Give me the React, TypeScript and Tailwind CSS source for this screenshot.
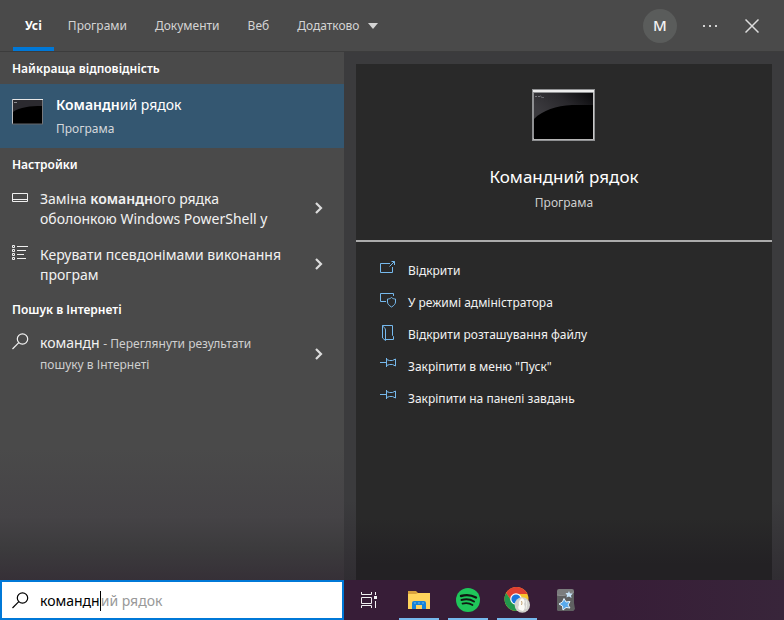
import { useState } from "react";
import type { ReactNode } from "react";

function Chevron() {
  return (
    <svg width="10" height="14" viewBox="0 0 10 14" fill="none" stroke="#dcdcdc" strokeWidth="2.2" className="mb-0.5" aria-hidden="true">
      <path d="M2 2 7 7 2 12" />
    </svg>
  );
}

function SearchIcon() {
  return (
    <svg width="17" height="17" viewBox="0 0 17 17" fill="none" stroke="currentColor" strokeWidth="1.2" aria-hidden="true">
      <circle cx="10.5" cy="6" r="5.2" />
      <path d="M6.8 9.7.5 16" />
    </svg>
  );
}

function SmallConsole() {
  return (
    <svg width="32" height="27" viewBox="0 0 32 27" aria-hidden="true">
      <rect x="0" y="0" width="31" height="25" fill="#000" />
      <path d="M1 1H30V7C18 7 8 8 1 13Z" fill="#2b2a2f" />
      <path d="M0 .5H31" stroke="#e6e6e6" />
      <path d="M.5 0V25" stroke="#b9bcc0" />
      <path d="M30.5 1V25" stroke="#77797d" />
      <path d="M0 25H31" stroke="#66686c" />
      <path d="M2 3.5H5" stroke="#8c8c90" />
    </svg>
  );
}

function LargeConsole() {
  return (
    <svg width="64" height="52" viewBox="0 0 64 52" aria-hidden="true">
      <defs>
        <linearGradient id="glare" x1="0" y1="0.5" x2="1" y2="0">
          <stop offset="0" stopColor="#3b3a3e" />
          <stop offset="0.5" stopColor="#29282c" />
          <stop offset="1" stopColor="#08080a" />
        </linearGradient>
      </defs>
      <rect width="63" height="52" fill="#8f9092" />
      <rect x="1" y="1" width="61" height="2" fill="#ededed" />
      <rect x="1" y="49" width="61" height="2" fill="#b5b5b5" />
      <rect x="61" y="3" width="1" height="47" fill="#c9c9c9" />
      <rect x="2" y="4" width="59" height="46" fill="#000" />
      <path d="M2 4H61V16H40C24 17 11 21 2 30Z" fill="url(#glare)" />
      <path d="M3 7.5H5M6 7.5H8" stroke="#77777c" />
      <path d="M8.500 6.500 9.500 8.500H12" stroke="#66666b" fill="none" />
    </svg>
  );
}

function DesktopIcon() {
  return (
    <svg width="16" height="16" viewBox="0 0 16 16" fill="none" stroke="#f0f0f0" aria-hidden="true">
      <path d="M.5.5H15.500V8.500H.5ZM.5 6.500H15.500" />
    </svg>
  );
}

function AliasListIcon() {
  return (
    <svg width="16" height="16" viewBox="0 0 16 16" fill="none" stroke="#f0f0f0" aria-hidden="true">
      <path d="M.5.5H2.500V2.500H.5ZM.5 4.500H2.500V6.500H.5ZM.5 8.500H2.500V10.500H.5ZM.5 12.500H2.500V14.500H.5Z" />
      <path d="M5 1.500H16M5 5.500H14M5 9.500H12M5 13.500H14" />
    </svg>
  );
}

function OpenIcon() {
  return (
    <svg width="16" height="16" viewBox="0 0 16 16" fill="none" stroke="#76b9ed" aria-hidden="true">
      <path d="M10 2.500H.5V11.500H12.500V6M9.500 5.500 14.500.5M11.500.5H14.500V4" />
    </svg>
  );
}

function AdminIcon() {
  return (
    <svg width="16" height="16" viewBox="0 0 16 16" fill="none" stroke="#76b9ed" aria-hidden="true">
      <path d="M6 8.500H.5V.5H13.500V3" />
      <path d="M11.500 4.500C10.500 5.500 9 6 7.500 6V9C7.500 11 9 12.500 11.500 14C14 12.500 15.500 11 15.500 9V6C14 6 12.500 5.500 11.500 4.500Z" />
    </svg>
  );
}

function FolderOutlineIcon() {
  return (
    <svg width="16" height="16" viewBox="0 0 16 16" fill="none" stroke="#76b9ed" aria-hidden="true">
      <path d="M6 14.500H13.500V11.500L12.500 10.500V.5H2.500V13L5.500 15.500V5C5.500 3 3.500 2.500 2.500.5" />
    </svg>
  );
}

function PinIcon() {
  return (
    <svg width="16" height="16" viewBox="0 0 16 16" fill="none" stroke="#76b9ed" aria-hidden="true">
      <path d="M0 5.500H6.500M6.500 1V10M6.500 2.500 9.500 3.500H12.500L15.500 2V9L12.500 7.500H9.500L6.500 8.500" />
    </svg>
  );
}

function TaskViewIcon() {
  return (
    <svg width="18" height="16" viewBox="0 0 18 16" fill="none" stroke="#f2f2f2" aria-hidden="true">
      <path d="M.5 0V2.500H10.500V0M.5 5.500H10.500V11.500H.5ZM.5 16V13.500H10.500V16M14.500 0V3M14.500 9V16" />
      <rect x="13" y="4" width="3" height="3" fill="#f2f2f2" stroke="none" />
    </svg>
  );
}

function ExplorerIcon() {
  return (
    <svg width="22" height="19" viewBox="0 0 22 19" aria-hidden="true">
      <path d="M0 0H8L10 2H21V18H0Z" fill="#d9a23e" />
      <path d="M0 3H8L10 2H22V18H0Z" fill="#ffd35c" />
      <path d="M4 18V12Q4 10 6 10H16Q18 10 18 12V18H14V14H8V18Z" fill="#1683d8" />
      <path d="M6 12H16" stroke="#6ab7ee" strokeDasharray="2 2" />
    </svg>
  );
}

function SpotifyIcon() {
  return (
    <svg width="24" height="24" viewBox="0 0 24 24" aria-hidden="true">
      <circle cx="12" cy="12" r="12" fill="#1fc65a" />
      <g fill="none" stroke="#101812" strokeLinecap="round">
        <path d="M5 8C10 6.500 15.500 7 20 9.500" strokeWidth="2.400" />
        <path d="M5.500 12C10 10.800 14.500 11.300 18 13.500" strokeWidth="2" />
        <path d="M6.500 15.600C10 14.700 13.500 15 16.500 17" strokeWidth="1.700" />
      </g>
    </svg>
  );
}

function ChromeIcon() {
  return (
    <svg width="26" height="26" viewBox="0 0 26 26" aria-hidden="true">
      <circle cx="12.500" cy="12" r="12" fill="#f7c52d" />
      <path d="M2.100 6A12 12 0 0 1 22.900 6L23.400 7H12.500L7.500 14Z" fill="#df4032" />
      <path d="M2.100 6A12 12 0 0 0 12.500 24L16 17L7.500 14Z" fill="#22974d" />
      <circle cx="12" cy="12" r="5.800" fill="#fff" />
      <circle cx="12" cy="12" r="4.600" fill="#1b76dc" />
      <circle cx="18.300" cy="18" r="7.700" fill="#d2d1cd" />
      <path d="M18 11Q22 13 20 17Q22 21 19 24Q12 23 15 18Q14 14 18 11Z" fill="#fbfaf6" />
      <path d="M22 13Q23.500 17 22 22" stroke="#f0efeb" fill="none" />
      <path d="M17.500 14Q18.500 16 17.500 18" stroke="#c3a678" fill="none" />
    </svg>
  );
}

function AnkiIcon() {
  return (
    <svg width="18" height="22" viewBox="0 0 18 22" aria-hidden="true">
      <rect width="17" height="22" rx="2" fill="#7b7c7d" />
      <path d="M0 6Q9 8 17 3V14L18 20Q17 22 15 22H2Q0 22 0 20Z" fill="#5f6061" />
      <path d="M0 6Q8 8 17 3" stroke="#909192" fill="none" />
      <path d="M7 9.500 9 13 13 12.500 11 16 13 19 9 18.500 6 21 5.500 17 2 15 5.500 13Z" fill="#58a9ec" stroke="#e7f4ff" />
      <path d="M12 2 13 4.500 16 4.500 14 6.500 14.500 9 12 7.500 9.500 8.500 10 6 8.500 4 11 4Z" fill="#c6e2f7" />
    </svg>
  );
}

const tabs = ["Усі", "Програми", "Документи", "Веб"];

const actions: { label: string; icon: ReactNode }[] = [
  { label: "Відкрити", icon: <OpenIcon /> },
  { label: "У режимі адміністратора", icon: <AdminIcon /> },
  { label: "Відкрити розташування файлу", icon: <FolderOutlineIcon /> },
  { label: 'Закріпити в меню "Пуск"', icon: <PinIcon /> },
  { label: "Закріпити на панелі завдань", icon: <PinIcon /> },
];

function SectionTitle({ children }: { children: ReactNode }) {
  return <h2 className="flex h-8 items-center px-3 pt-0.5 text-[12px] font-semibold text-white">{children}</h2>;
}

function ResultRow({ icon, children }: { icon: ReactNode; children: ReactNode }) {
  return (
    <button type="button" className="flex w-full items-center py-2 pr-5 pl-3 text-left text-[14px] leading-5 text-[#f2f2f2]">
      <span className="w-7 shrink-0 self-start">{icon}</span>
      <span className="min-w-0 flex-1">{children}</span>
      <Chevron />
    </button>
  );
}

function TaskButton({ label, running, children }: { label: string; running?: boolean; children: ReactNode }) {
  return (
    <button
      type="button"
      aria-label={label}
      className={`flex h-10 w-10 items-center justify-center border-b-2 pt-0.5 ${running ? "border-[#76b9ed]" : "border-transparent"}`}
    >
      {children}
    </button>
  );
}

export default function App() {
  const [query, setQuery] = useState("командн");
  const suggestion = "командний рядок";
  const rest = suggestion.startsWith(query) ? suggestion.slice(query.length) : "";

  return (
    <div className="flex min-h-screen flex-col bg-[#371d37] font-['Noto_Sans','Open_Sans',sans-serif] text-white">
      <header className="flex h-[52px] shrink-0 items-center border-b border-[#3c3c3c] bg-[#4a4a4a] pr-[23px] pl-[13px] text-[12px] text-[#d4d4d4]">
        <nav className="flex h-full items-center">
          {tabs.map((tab, i) => (
            <button
              key={tab}
              type="button"
              className={
                i === 0
                  ? "h-full border-y-4 border-t-transparent border-b-[#0078d7] px-3 font-bold text-white"
                  : "h-full px-[14px]"
              }
            >
              {tab}
            </button>
          ))}
          <button type="button" className="flex h-full items-center gap-2 px-[14px]">
            Додатково
            <svg width="10" height="6" viewBox="0 0 10 6" fill="#d4d4d4" aria-hidden="true">
              <path d="M0 0H10L5 6Z" />
            </svg>
          </button>
        </nav>
        <div className="ml-auto flex items-center">
          <button type="button" className="h-[34px] w-[34px] rounded-full bg-[#5a5c5b] text-[15px] font-medium text-[#f2f2f2]">
            M
          </button>
          <button type="button" aria-label="Параметри" className="ml-6 flex h-8 w-[18px] items-center justify-center">
            <svg width="14" height="2" viewBox="0 0 14 2" fill="#d4d4d4" aria-hidden="true">
              <path d="M0 0H2V2H0ZM6 0H8V2H6ZM12 0H14V2H12Z" />
            </svg>
          </button>
          <button type="button" aria-label="Закрити" className="ml-6 flex h-8 w-[18px] items-center justify-center">
            <svg width="14" height="14" viewBox="0 0 14 14" fill="none" stroke="#dcdcdc" strokeWidth="1.500" aria-hidden="true">
              <path d="M.5.5 13.500 13.500M13.500.5.5 13.500" />
            </svg>
          </button>
        </div>
      </header>

      <main className="flex flex-1">
        <section className="w-[344px] shrink-0 bg-[linear-gradient(to_bottom,#4a4a4a_0,#4a4a4a_75%,#454346_88%,#3c3b3d_94%,#363037_100%)]">
          <SectionTitle>Найкраща відповідність</SectionTitle>
          <button type="button" className="flex h-16 w-full bg-[#345771] px-3 pt-[10px] text-left">
            <span className="w-11 shrink-0 pt-[5px]">
              <SmallConsole />
            </span>
            <span className="flex flex-col gap-1">
              <span className="text-[14px] leading-[22px]">
                <b className="font-semibold">Командн</b>ий рядок
              </span>
              <span className="text-[12px] leading-[18px] text-[#d4d8dc]">Програма</span>
            </span>
          </button>
          <SectionTitle>Настройки</SectionTitle>
          <div className="flex flex-col pt-px">
            <ResultRow icon={<span className="block pt-1"><DesktopIcon /></span>}>
              Заміна <b className="font-semibold">командн</b>ого рядка
              <br />
              оболонкою Windows PowerShell у
            </ResultRow>
            <ResultRow icon={<AliasListIcon />}>
              Керувати псевдонімами виконання
              <br />
              програм
            </ResultRow>
          </div>
          <SectionTitle>Пошук в Інтернеті</SectionTitle>
          <ResultRow icon={<SearchIcon />}>
            <span className="block">
              командн <span className="text-[12px] text-[#cfcfcf]">- Переглянути результати</span>
            </span>
            <span className="block text-[12px] leading-[22px] text-[#cfcfcf]">пошуку в Інтернеті</span>
          </ResultRow>
        </section>

        <section className="flex min-w-0 flex-1 bg-[linear-gradient(to_bottom,#3b3b3d_0,#3b3b3d_85%,#302d32_100%)] px-3 pt-3">
          <div className="flex min-w-0 flex-1 flex-col bg-[linear-gradient(to_bottom,#292929_0,#292929_88%,#232124_97%)]">
            <div className="flex h-[178px] flex-col items-center border-b-2 border-[#ababab] pt-[25px]">
              <LargeConsole />
              <h1 className="mt-6 text-[17px] leading-6">Командний рядок</h1>
              <p className="mt-[5px] text-[12px] leading-[18px] text-[#cfcfcf]">Програма</p>
            </div>
            <ul className="flex flex-col pt-[13px]">
              {actions.map((action) => (
                <li key={action.label}>
                  <button type="button" className="flex h-8 w-full items-center gap-3 px-6 text-left text-[12px] text-[#f2f2f2]">
                    <span className="pb-1">{action.icon}</span>
                    {action.label}
                  </button>
                </li>
              ))}
            </ul>
          </div>
        </section>
      </main>

      <footer className="flex h-10 shrink-0">
        <label className="flex w-[344px] shrink-0 items-center border-2 border-[#0078d7] bg-white pl-[10px] text-black">
          <span className="w-7 shrink-0">
            <SearchIcon />
          </span>
          <span className="relative flex-1 pt-0.5 text-[14px] leading-5">
            <input
              type="text"
              aria-label="Пошук"
              value={query}
              onChange={(e) => setQuery(e.target.value)}
              className="block w-full bg-transparent caret-transparent outline-none"
            />
            <span aria-hidden="true" className="pointer-events-none absolute inset-0 flex items-center pt-0.5">
              <span className="invisible">{query}</span>
              <span className="h-5 w-px bg-black" />
              <span className="text-[#999999]">{rest}</span>
            </span>
          </span>
        </label>
        <div className="flex flex-1 items-center gap-[9px] bg-[linear-gradient(to_right,#371d37_60%,#38253a_100%)] pl-1.5">
          <TaskButton label="Подання завдань">
            <TaskViewIcon />
          </TaskButton>
          <TaskButton label="Файловий провідник" running>
            <ExplorerIcon />
          </TaskButton>
          <TaskButton label="Spotify" running>
            <SpotifyIcon />
          </TaskButton>
          <TaskButton label="Google Chrome" running>
            <ChromeIcon />
          </TaskButton>
          <TaskButton label="Anki">
            <AnkiIcon />
          </TaskButton>
        </div>
      </footer>
    </div>
  );
}
